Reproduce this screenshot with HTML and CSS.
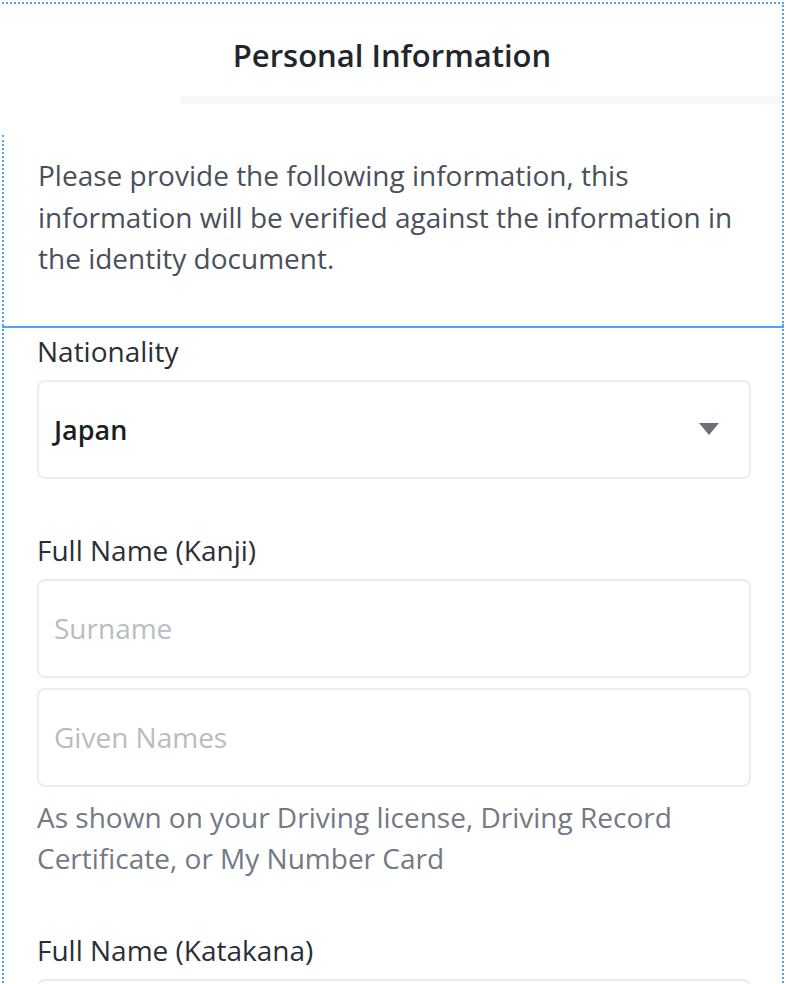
FILE: index.html
```html
<!DOCTYPE html>
<html lang="en">
<head>
<meta charset="utf-8">
<title>Personal Information</title>
<link rel="stylesheet" href="styles.css">
</head>
<body>
<div class="page">
  <section class="intro">
    <header class="header">
      <h1 class="title">Personal Information</h1>
      <div class="stripe"></div>
    </header>
    <p class="desc">Please provide the following information, this information will be verified against the information in the identity document.</p>
  </section>
  <section class="form">
    <div class="field">
      <label class="label">Nationality</label>
      <div class="select">
        <span class="value">Japan</span>
        <svg class="caret" width="20" height="12" viewBox="0 0 20 12"><path d="M0 0H20L10 12Z" fill="#6b6f79"/></svg>
      </div>
    </div>
    <div class="field">
      <label class="label">Full Name (Kanji)</label>
      <div class="input"><span class="placeholder">Surname</span></div>
      <div class="input"><span class="placeholder">Given Names</span></div>
      <p class="hint">As shown on your Driving license, Driving Record Certificate, or My Number Card</p>
    </div>
    <div class="field">
      <label class="label">Full Name (Katakana)</label>
      <div class="input"><span class="placeholder">Surname</span></div>
    </div>
  </section>
</div>
</body>
</html>
```
FILE: styles.css
```css
html, body {
  margin: 0;
  padding: 0;
  background: #ffffff;
}
body {
  font-family: "Open Sans", "Noto Sans", sans-serif;
  color: #23272e;
  overflow: hidden;
  height: 984px;
}
.page {
  padding: 2px 2px 0 2px;
}
.intro {
  border-top: 2px dotted #4ea2fa;
  border-right: 2px dotted #4ea2fa;
}
.header {
  display: flex;
  flex-direction: column;
}
.title {
  margin: 0;
  height: 92px;
  line-height: 102px;
  text-align: center;
  font-size: 31px;
  font-weight: 600;
  color: #22262c;
}
.stripe {
  margin-left: 178px;
  height: 8px;
  background: #f6f7f7;
}
.desc {
  margin: 31px 0 0 0;
  border-left: 2px dotted #4ea2fa;
  padding: 20px 30px 46px 34px;
  font-size: 28px;
  line-height: 41.5px;
  color: #4a505a;
}
.form {
  border-top: 2px solid #4ea2fa;
  border-left: 2px dotted #4ea2fa;
  border-right: 2px dotted #4ea2fa;
  padding: 5px 31px 0 33px;
  display: flex;
  flex-direction: column;
  gap: 53px;
}
.field {
  display: flex;
  flex-direction: column;
  gap: 10px;
}
.label {
  font-size: 28px;
  line-height: 36px;
  color: #2a2f36;
  margin-bottom: 1px;
}
.select, .input {
  box-sizing: border-box;
  height: 99px;
  flex: none;
  border: 2px solid #ebecf0;
  border-radius: 8px;
  display: flex;
  align-items: center;
  padding: 0 30px 0 15px;
}
.select {
  justify-content: space-between;
}
.value {
  font-size: 27px;
  font-weight: 600;
  color: #1b1f24;
}
.caret {
  display: block;
}
.placeholder {
  font-size: 28px;
  color: #b9bcc3;
}
.hint {
  margin: 0;
  font-size: 28px;
  line-height: 41px;
  color: #737985;
}
```
